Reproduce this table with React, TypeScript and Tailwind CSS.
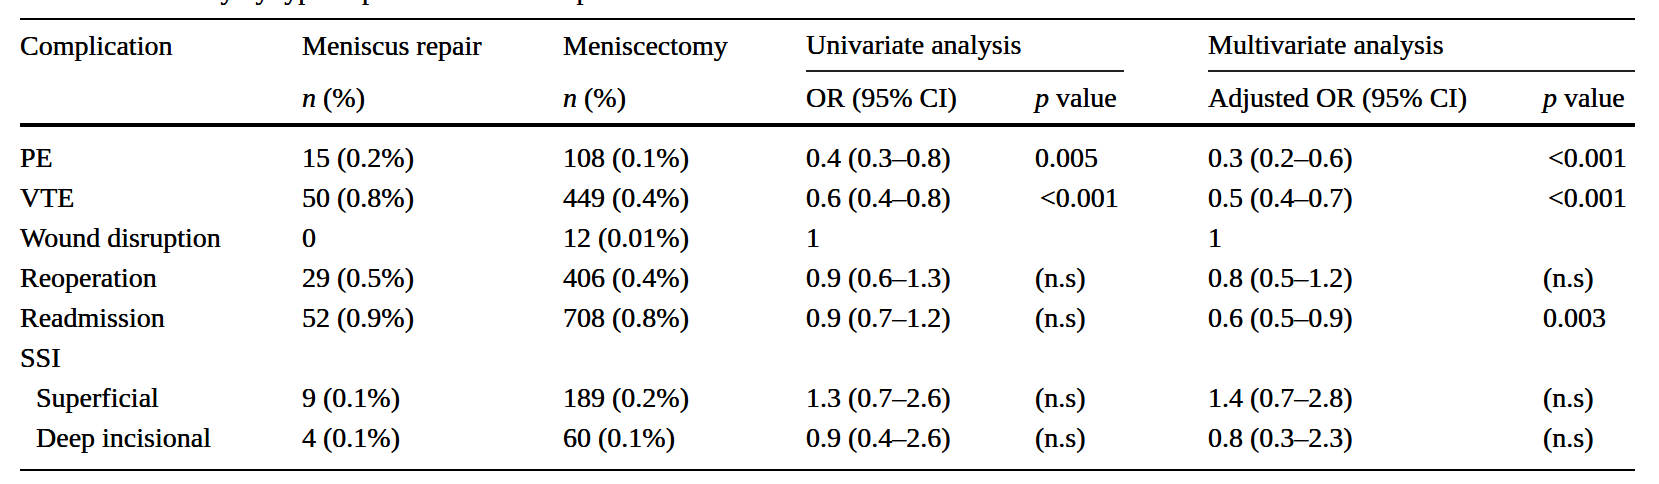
import React from "react";

type Row = {
  label: string;
  indent?: boolean;
  repair?: string;
  ectomy?: string;
  uniOr?: string;
  uniP?: string;
  multiOr?: string;
  multiP?: string;
};

const ROWS: Row[] = [
  { label: "PE", repair: "15 (0.2%)", ectomy: "108 (0.1%)", uniOr: "0.4 (0.3–0.8)", uniP: "0.005", multiOr: "0.3 (0.2–0.6)", multiP: "<0.001" },
  { label: "VTE", repair: "50 (0.8%)", ectomy: "449 (0.4%)", uniOr: "0.6 (0.4–0.8)", uniP: "<0.001", multiOr: "0.5 (0.4–0.7)", multiP: "<0.001" },
  { label: "Wound disruption", repair: "0", ectomy: "12 (0.01%)", uniOr: "1", uniP: "", multiOr: "1", multiP: "" },
  { label: "Reoperation", repair: "29 (0.5%)", ectomy: "406 (0.4%)", uniOr: "0.9 (0.6–1.3)", uniP: "(n.s)", multiOr: "0.8 (0.5–1.2)", multiP: "(n.s)" },
  { label: "Readmission", repair: "52 (0.9%)", ectomy: "708 (0.8%)", uniOr: "0.9 (0.7–1.2)", uniP: "(n.s)", multiOr: "0.6 (0.5–0.9)", multiP: "0.003" },
  { label: "SSI" },
  { label: "Superficial", indent: true, repair: "9 (0.1%)", ectomy: "189 (0.2%)", uniOr: "1.3 (0.7–2.6)", uniP: "(n.s)", multiOr: "1.4 (0.7–2.8)", multiP: "(n.s)" },
  { label: "Deep incisional", indent: true, repair: "4 (0.1%)", ectomy: "60 (0.1%)", uniOr: "0.9 (0.4–2.6)", uniP: "(n.s)", multiOr: "0.8 (0.3–2.3)", multiP: "(n.s)" },
];

// column widths taken from the scan
const GRID = "grid grid-cols-[282px_261px_243px_229px_173px_335px_92px]";

export default function App() {
  return (
    <div
      className="w-[1659px] h-[484px] bg-white overflow-hidden pl-[20px] pr-[24px] text-black text-[28px] leading-[32px] [text-shadow:0_0_0.5px_#000]"
      style={{ fontFamily: '"Liberation Serif", "Times New Roman", serif' }}
    >
      {/* caption, cut off at the top of the scan */}
      <div className="h-[18px] overflow-hidden">
        <div className="mt-[-26px] leading-[31px] whitespace-nowrap">
          <span className="font-bold">Table 3</span>&nbsp; Morbidity by type of procedure and comparison
        </div>
      </div>

      <div className="border-t-2 border-black">
        {/* header row 1 */}
        <div className={`${GRID} h-[52px]`}>
          <div className="flex items-center">Complication</div>
          <div className="flex items-center">Meniscus repair</div>
          <div className="flex items-center">Meniscectomy</div>
          <div className="col-span-2 mr-[84px] flex items-center border-b-2 border-[#222]">Univariate analysis</div>
          <div className="col-span-2 flex items-center border-b-2 border-[#222]">Multivariate analysis</div>
        </div>

        {/* header row 2 */}
        <div className={`${GRID} h-[51px] items-center`}>
          <div />
          <div><i>n</i> (%)</div>
          <div><i>n</i> (%)</div>
          <div>OR (95% CI)</div>
          <div><i>p</i> value</div>
          <div>Adjusted OR (95% CI)</div>
          <div><i>p</i> value</div>
        </div>

        {/* body */}
        <div className="border-t-4 border-b-2 border-black py-[11px]">
          {ROWS.map((r) => (
            <div key={r.label} className={`${GRID} h-[40px] items-center whitespace-nowrap`}>
              <div className={r.indent ? "pl-[16px]" : ""}>{r.label}</div>
              <div>{r.repair}</div>
              <div>{r.ectomy}</div>
              <div>{r.uniOr}</div>
              <div className={r.uniP?.startsWith("<") ? "pl-[5px]" : ""}>{r.uniP}</div>
              <div>{r.multiOr}</div>
              <div className={r.multiP?.startsWith("<") ? "pl-[5px]" : ""}>{r.multiP}</div>
            </div>
          ))}
        </div>
      </div>
    </div>
  );
}
